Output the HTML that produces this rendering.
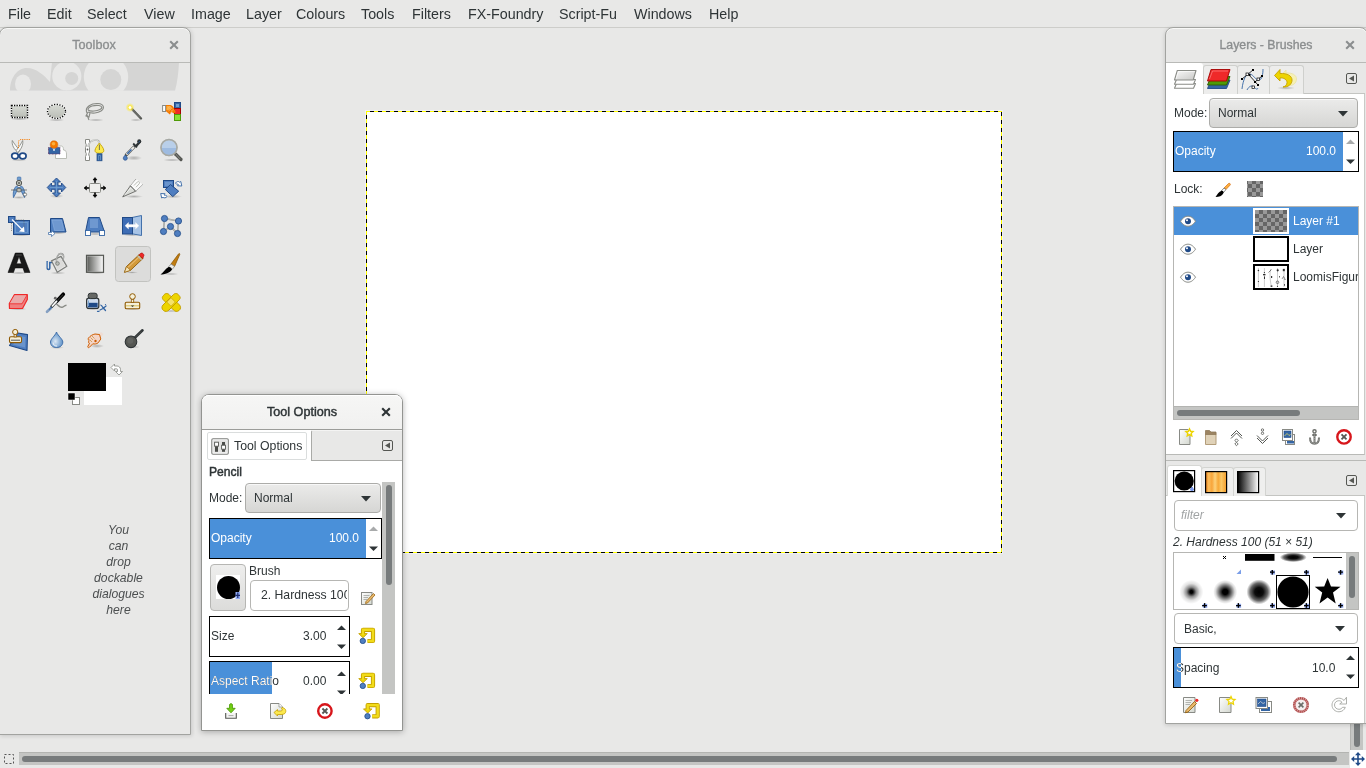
<!DOCTYPE html>
<html><head><meta charset="utf-8">
<style>
html,body{margin:0;padding:0;}
body{width:1366px;height:768px;overflow:hidden;position:relative;background:#e8e8e7;font-family:"Liberation Sans",sans-serif;color:#2e3436;}
.a{position:absolute;}
.t{position:absolute;white-space:nowrap;line-height:1;will-change:transform;}
.win{position:absolute;box-sizing:border-box;}
svg{position:absolute;overflow:visible;}
</style></head><body>

<!-- menubar -->
<div class="a" style="left:0;top:0;width:1366px;height:27px;background:#e8e8e7;border-bottom:1px solid #cdcdca;"></div>
<div class="t" style="top:6.5px;left:8px;font-size:14.3px;color:#2e3436;">File</div>
<div class="t" style="top:6.5px;left:46.5px;font-size:14.3px;">Edit</div>
<div class="t" style="top:6.5px;left:87px;font-size:14.3px;">Select</div>
<div class="t" style="top:6.5px;left:143.5px;font-size:14.3px;">View</div>
<div class="t" style="top:6.5px;left:190.5px;font-size:14.3px;">Image</div>
<div class="t" style="top:6.5px;left:245.5px;font-size:14.3px;">Layer</div>
<div class="t" style="top:6.5px;left:296px;font-size:14.3px;">Colours</div>
<div class="t" style="top:6.5px;left:360.5px;font-size:14.3px;">Tools</div>
<div class="t" style="top:6.5px;left:411.5px;font-size:14.3px;">Filters</div>
<div class="t" style="top:6.5px;left:467.5px;font-size:14.3px;">FX-Foundry</div>
<div class="t" style="top:6.5px;left:558.5px;font-size:14.3px;">Script-Fu</div>
<div class="t" style="top:6.5px;left:633.5px;font-size:14.3px;">Windows</div>
<div class="t" style="top:6.5px;left:708.5px;font-size:14.3px;">Help</div>

<!-- canvas -->
<svg style="left:0;top:0" width="1366" height="768">
  <rect x="365.5" y="110.5" width="637" height="443" fill="none" stroke="#f0f0f8" stroke-width="1"/>
  <rect x="366" y="111" width="636" height="442" fill="#ffffff"/>
  <rect x="366.5" y="111.5" width="635" height="441" fill="none" stroke="#ffff00" stroke-width="1"/>
  <g stroke="#000" stroke-width="1" stroke-dasharray="4 4">
   <path d="M1001.5 111 V553" stroke-dashoffset="7"/>
   <path d="M366 552.5 H1002" stroke-dashoffset="5"/>
   <path d="M366 111.5 H1002" stroke-dashoffset="4"/>
   <path d="M366.5 111 V553" stroke-dashoffset="4"/>
  </g>
</svg>

<!-- bottom scrollbars -->
<div class="a" style="left:19px;top:752px;width:1330px;height:13px;background:#c4c5c3;border-top:1px solid #b3b4b1;box-sizing:border-box;"></div>
<div class="a" style="left:22px;top:756px;width:1315px;height:6px;background:#777b7c;border-radius:3px;"></div>
<div class="a" style="left:1350px;top:28px;width:13px;height:722px;background:#c4c5c3;border-left:1px solid #b3b4b1;box-sizing:border-box;"></div>
<div class="a" style="left:1354px;top:28px;width:6px;height:719px;background:#777b7c;border-radius:3px;"></div>
<div class="a" style="left:1350px;top:750px;width:16px;height:18px;background:#ffffff;"></div>
<svg style="left:0;top:0" width="1366" height="768">
  <rect x="4.5" y="754.5" width="9" height="9" fill="none" stroke="#555" stroke-width="1" stroke-dasharray="2 2"/>
</svg>

<!-- TOOLBOX window -->
<div class="win" style="left:-1px;top:27px;width:192px;height:708px;background:#e8e8e7;border:1px solid #a2a3a0;border-radius:8px 8px 0 0;box-shadow:inset 0 1px #f8f8f7, 1px 1px 4px rgba(0,0,0,0.14);"></div>
<div class="a" style="left:0;top:62px;width:190px;height:1px;background:#b9bab7;"></div>
<div class="t" style="top:38.6px;left:-5.65px;width:200px;text-align:center;font-size:12.6px;color:#8b8e8f;-webkit-text-stroke:0.35px #8b8e8f;">Toolbox</div>


<svg width="10" height="10" style="left:169px;top:40px"><path d="M1.2 1.2L8.8 8.8M8.8 1.2L1.2 8.8" stroke="#8b8e8f" stroke-width="2.1"/></svg>
<div class="t" style="top:521.5px;left:58px;width:121px;text-align:center;font-size:12.2px;line-height:16px;font-style:italic;color:#4c4f50;white-space:normal;">You<br>can<br>drop<br>dockable<br>dialogues<br>here</div>

<!-- TOOL OPTIONS window -->
<div class="win" style="left:201px;top:394px;width:202px;height:337px;background:#ffffff;border:1px solid #939491;border-radius:8px 8px 0 0;box-shadow:0 1px 6px rgba(0,0,0,0.28);"></div>
<div class="a" style="left:202px;top:395px;width:200px;height:34px;background:linear-gradient(#f6f6f5,#f1f1f0);border-radius:7px 7px 0 0;border-bottom:1px solid #9c9d9a;box-shadow:inset 0 1px #ffffff;"></div>
<div class="t" style="top:406.1px;left:201.65px;width:200px;text-align:center;font-size:12.6px;color:#2e3436;-webkit-text-stroke:0.45px #2e3436;">Tool Options</div>
<svg width="10" height="10" style="left:381px;top:406.5px"><path d="M1.2 1.2L8.8 8.8M8.8 1.2L1.2 8.8" stroke="#2e3436" stroke-width="2.1"/></svg>
<div class="a" style="left:311px;top:430px;width:91px;height:31px;background:#e8e8e7;border-left:1px solid #a9aaa7;border-bottom:1px solid #a9aaa7;border-top:1px solid #f4f4f3;border-top-left-radius:2px;box-sizing:border-box;"></div>
<div class="a" style="left:207px;top:432px;width:100px;height:28px;background:#ffffff;border:1px solid #dadddd;border-radius:2px;box-sizing:border-box;"></div>
<div class="t" style="top:439.5px;left:233.5px;font-size:12.3px;color:#2e3436;">Tool Options</div>
<div class="a" style="left:202px;top:461px;width:200px;height:269px;background:#ffffff;"></div>
<div class="t" style="top:466.1px;left:208.8px;font-size:12.1px;color:#2e3436;-webkit-text-stroke:0.45px #2e3436;">Pencil</div>
<div class="t" style="top:491.5px;left:208.5px;font-size:12px;color:#2e3436;">Mode:</div>
<div class="a" style="left:245px;top:483px;width:136px;height:30px;box-sizing:border-box;border:1px solid #acaca9;border-radius:4px;background:linear-gradient(#ebebea,#d6d6d4);box-shadow:inset 0 1px #f8f8f8;"></div>
<div class="t" style="top:491.5px;left:253.5px;font-size:12px;color:#2e3436;">Normal</div>
<svg width="10" height="6" style="left:360.8px;top:495.5px"><path d="M0 0H10L5 5.5Z" fill="#2e3436"/></svg>

<div class="a" style="left:209px;top:518px;width:173px;height:41px;box-sizing:border-box;border:1px solid #000;background:#fff;"></div>
<div class="a" style="left:210px;top:519px;width:156px;height:39px;background:#4a90d9;"></div>
<div class="t" style="top:532px;left:211px;font-size:12px;color:#fff;">Opacity</div>
<div class="t" style="top:532px;left:328.5px;font-size:12px;color:#fff;">100.0</div>
<svg width="10" height="6" style="left:369px;top:525.5px"><path d="M0 5H9L4.5 0.5Z" fill="#a8aaab"/></svg>
<svg width="10" height="6" style="left:369px;top:545.5px"><path d="M0 0.5H9L4.5 5Z" fill="#2e3436"/></svg>

<div class="a" style="left:210px;top:564px;width:36px;height:47px;box-sizing:border-box;border:1px solid #b6b6b3;border-radius:4px;background:linear-gradient(#eeeeed,#dcdcda);"></div>
<div class="a" style="left:216px;top:575px;width:24px;height:24px;background:#fff;"></div>
<div class="a" style="left:216.5px;top:575.5px;width:23px;height:23px;background:#000;border-radius:50%;"></div>
<div class="t" style="top:564.5px;left:249px;font-size:12px;color:#2e3436;">Brush</div>
<div class="a" style="left:250px;top:580px;width:99px;height:31px;box-sizing:border-box;border:1px solid #b6b6b3;border-radius:4px;background:#fff;overflow:hidden;">
  <div class="a" style="left:0;top:0;width:96px;height:29px;overflow:hidden;"><div class="t" style="top:8px;left:10px;font-size:12.2px;color:#2e3436;">2. Hardness 100</div></div>
</div>

<div class="a" style="left:209px;top:616px;width:141px;height:41px;box-sizing:border-box;border:1px solid #000;background:#fff;"></div>
<div class="t" style="top:630px;left:211px;font-size:12px;color:#2e3436;">Size</div>
<div class="t" style="top:630px;left:302.5px;font-size:12px;color:#2e3436;">3.00</div>
<svg width="10" height="6" style="left:337px;top:624.5px"><path d="M0 5H9L4.5 0.5Z" fill="#2e3436"/></svg>
<svg width="10" height="6" style="left:337px;top:643.5px"><path d="M0 0.5H9L4.5 5Z" fill="#2e3436"/></svg>

<div class="a" style="left:202px;top:661px;width:180px;height:33px;overflow:hidden;">
  <div class="a" style="left:7px;top:0;width:141px;height:41px;box-sizing:border-box;border:1px solid #000;background:#fff;"></div>
  <div class="a" style="left:8px;top:1px;width:62px;height:39px;background:#4a90d9;"></div>
  <div class="t" style="top:14px;left:9px;font-size:12px;color:#2e3436;">Aspect Ratio</div>
  <div class="a" style="left:9px;top:2px;width:61px;height:37px;overflow:hidden;"><div class="t" style="top:12px;left:0;font-size:12px;color:#fff;">Aspect Ratio</div></div>
  <div class="t" style="top:14px;left:100.5px;font-size:12px;color:#2e3436;">0.00</div>
  <svg width="10" height="6" style="left:135px;top:9.5px"><path d="M0 5H9L4.5 0.5Z" fill="#2e3436"/></svg>
  <svg width="10" height="6" style="left:135px;top:28.5px"><path d="M0 0.5H9L4.5 5Z" fill="#2e3436"/></svg>
</div>
<!-- tool options scrollbar -->
<div class="a" style="left:382px;top:482px;width:13px;height:212px;background:#c4c5c3;"></div>
<div class="a" style="left:386px;top:485px;width:6px;height:100px;background:#777b7c;border-radius:3px;"></div>


<!-- LAYERS window -->
<div class="win" style="left:1165px;top:27px;width:203px;height:697px;background:#e8e8e7;border:1px solid #a2a3a0;border-radius:8px 8px 0 0;box-shadow:inset 0 1px #f8f8f7, 0 1px 4px rgba(0,0,0,0.16);"></div>
<div class="a" style="left:1166px;top:62px;width:200px;height:1px;background:#b9bab7;"></div>
<div class="t" style="top:38.6px;left:1165.8px;width:200px;text-align:center;font-size:12.3px;color:#8b8e8f;-webkit-text-stroke:0.35px #8b8e8f;">Layers - Brushes</div>
<svg width="10" height="10" style="left:1345px;top:40px"><path d="M1.2 1.2L8.8 8.8M8.8 1.2L1.2 8.8" stroke="#8b8e8f" stroke-width="2.1"/></svg>
<!-- layers tabs -->
<div class="a" style="left:1166px;top:63px;width:199px;height:31px;background:#e8e8e7;border-bottom:1px solid #c4c5c2;box-sizing:border-box;"></div>
<div class="a" style="left:1203px;top:65px;width:35px;height:29px;background:#ededec;border:1px solid #cfd0cd;border-bottom:none;border-radius:3px 3px 0 0;box-sizing:border-box;"></div>
<div class="a" style="left:1237px;top:65px;width:33px;height:29px;background:#ededec;border:1px solid #cfd0cd;border-bottom:none;border-radius:3px 3px 0 0;box-sizing:border-box;"></div>
<div class="a" style="left:1269px;top:65px;width:35px;height:29px;background:#ededec;border:1px solid #cfd0cd;border-bottom:none;border-radius:3px 3px 0 0;box-sizing:border-box;"></div>
<div class="a" style="left:1166px;top:63px;width:37px;height:31px;background:#ffffff;border-radius:0 3px 0 0;box-sizing:border-box;"></div>
<div class="a" style="left:1166px;top:94px;width:199px;height:361px;background:#ffffff;border-right:1px solid #c9cac7;border-bottom:1px solid #b9bab7;box-sizing:border-box;"></div>
<div class="t" style="top:106.5px;left:1173.5px;font-size:12px;color:#2e3436;">Mode:</div>
<div class="a" style="left:1209px;top:98px;width:149px;height:30px;box-sizing:border-box;border:1px solid #acaca9;border-radius:4px;background:linear-gradient(#ebebea,#d6d6d4);box-shadow:inset 0 1px #f8f8f8;"></div>
<div class="t" style="top:106.5px;left:1218px;font-size:12px;color:#2e3436;">Normal</div>
<svg width="10" height="6" style="left:1338px;top:110.5px"><path d="M0 0H10L5 5.5Z" fill="#2e3436"/></svg>

<div class="a" style="left:1173px;top:131px;width:186px;height:41px;box-sizing:border-box;border:1px solid #000;background:#fff;"></div>
<div class="a" style="left:1174px;top:132px;width:169px;height:39px;background:#4a90d9;"></div>
<div class="t" style="top:145px;left:1175px;font-size:12px;color:#fff;">Opacity</div>
<div class="t" style="top:145px;left:1305.5px;font-size:12px;color:#fff;">100.0</div>
<svg width="10" height="6" style="left:1346px;top:138.5px"><path d="M0 5H9L4.5 0.5Z" fill="#a8aaab"/></svg>
<svg width="10" height="6" style="left:1346px;top:158.5px"><path d="M0 0.5H9L4.5 5Z" fill="#2e3436"/></svg>

<div class="t" style="top:183px;left:1173.5px;font-size:12px;color:#2e3436;">Lock:</div>

<!-- layer list -->
<div class="a" style="left:1173px;top:206px;width:186px;height:214px;box-sizing:border-box;border:1px solid #b6b6b3;background:#fff;"></div>
<div class="a" style="left:1174px;top:207px;width:184px;height:28px;background:#4a90d9;"></div>
<div class="a" style="left:1253px;top:208px;width:36px;height:26px;background:#fff;"></div>
<div class="a" style="left:1255px;top:210px;width:32px;height:22px;background-color:#999;background-image:linear-gradient(45deg,#666 25%,transparent 25%,transparent 75%,#666 75%),linear-gradient(45deg,#666 25%,transparent 25%,transparent 75%,#666 75%);background-size:8px 8px;background-position:0 0,4px 4px;"></div>
<div class="t" style="top:214.5px;left:1293px;font-size:12px;color:#fff;">Layer #1</div>
<div class="a" style="left:1253px;top:236px;width:36px;height:26px;box-sizing:border-box;border:2px solid #000;background:#fff;"></div>
<div class="t" style="top:242.5px;left:1293px;font-size:12px;color:#2e3436;">Layer</div>
<div class="a" style="left:1253px;top:264px;width:36px;height:26px;box-sizing:border-box;border:2px solid #000;background:#fff;"></div>
<div class="a" style="left:1290px;top:264px;width:68px;height:26px;overflow:hidden;"><div class="t" style="top:6.5px;left:3px;font-size:12px;color:#2e3436;">LoomisFigure</div></div>
<div class="a" style="left:1174px;top:406px;width:184px;height:13px;background:#c4c5c3;border-top:1px solid #b3b4b1;box-sizing:border-box;"></div>
<div class="a" style="left:1177px;top:410px;width:123px;height:6px;background:#777b7c;border-radius:3px;"></div>

<!-- pane separator -->
<div class="a" style="left:1166px;top:455px;width:200px;height:6px;background:#e8e8e7;border-bottom:1px solid #b9bab7;box-sizing:border-box;"></div>
<!-- brushes tabs -->
<div class="a" style="left:1166px;top:461px;width:199px;height:35px;background:#e8e8e7;border-bottom:1px solid #c4c5c2;box-sizing:border-box;"></div>
<div class="a" style="left:1201px;top:467px;width:33px;height:29px;background:#efefee;border:1px solid #d3d4d1;border-bottom:none;border-radius:3px 3px 0 0;box-sizing:border-box;"></div>
<div class="a" style="left:1233px;top:467px;width:33px;height:29px;background:#efefee;border:1px solid #d3d4d1;border-bottom:none;border-radius:3px 3px 0 0;box-sizing:border-box;"></div>
<div class="a" style="left:1167px;top:465px;width:35px;height:31px;background:#ffffff;border:1px solid #d6d7d4;border-bottom:none;border-radius:3px 3px 0 0;box-sizing:border-box;"></div>
<div class="a" style="left:1166px;top:496px;width:199px;height:227px;background:#ffffff;border-right:1px solid #c9cac7;box-sizing:border-box;"></div>

<div class="a" style="left:1174px;top:500px;width:184px;height:31px;box-sizing:border-box;border:1px solid #b6b6b3;border-radius:4px;background:#fff;"></div>
<div class="t" style="top:508.5px;left:1180.5px;font-size:12px;font-style:italic;color:#a0a3a4;">filter</div>
<svg width="10" height="6" style="left:1335.5px;top:512.5px"><path d="M0 0H10L5 5.5Z" fill="#2e3436"/></svg>
<div class="t" style="top:535.5px;left:1173px;font-size:12px;font-style:italic;color:#2e3436;">2. Hardness 100 (51 × 51)</div>

<div class="a" style="left:1173px;top:552px;width:186px;height:58px;box-sizing:border-box;border:1px solid #b6b6b3;background:#fff;"></div>
<div class="a" style="left:1346px;top:553px;width:12px;height:56px;background:#c4c5c3;"></div>
<div class="a" style="left:1349px;top:556px;width:6px;height:42px;background:#777b7c;border-radius:3px;"></div>

<div class="a" style="left:1174px;top:613px;width:184px;height:31px;box-sizing:border-box;border:1px solid #b6b6b3;border-radius:4px;background:#fff;"></div>
<div class="t" style="top:622.5px;left:1184px;font-size:12px;color:#2e3436;">Basic,</div>
<svg width="10" height="6" style="left:1335px;top:625.5px"><path d="M0 0H10L5 5.5Z" fill="#2e3436"/></svg>

<div class="a" style="left:1173px;top:647px;width:186px;height:41px;box-sizing:border-box;border:1px solid #000;background:#fff;"></div>
<div class="a" style="left:1174px;top:648px;width:7px;height:39px;background:#4a90d9;"></div>
<div class="t" style="top:661.5px;left:1175.5px;font-size:12px;color:#2e3436;">Spacing</div>
<div class="a" style="left:1175px;top:649px;width:6px;height:37px;overflow:hidden;"><div class="t" style="top:12.5px;left:0.5px;font-size:12px;color:#fff;">Spacing</div></div>
<div class="t" style="top:661.5px;left:1312px;font-size:12px;color:#2e3436;">10.0</div>
<svg width="10" height="6" style="left:1346px;top:655px"><path d="M0 5H9L4.5 0.5Z" fill="#2e3436"/></svg>
<svg width="10" height="6" style="left:1346px;top:674px"><path d="M0 0.5H9L4.5 5Z" fill="#2e3436"/></svg>

<!-- ICONS1 -->
<svg style="left:0;top:0" width="1366" height="768">
<defs>
 <linearGradient id="gsel" x1="0" y1="0" x2="0" y2="1"><stop offset="0" stop-color="#d8dbd5"/><stop offset="1" stop-color="#babdb6"/></linearGradient>
 <linearGradient id="gblue" x1="0" y1="0" x2="1" y2="1"><stop offset="0" stop-color="#729fcf"/><stop offset="1" stop-color="#3465a4"/></linearGradient>
 <linearGradient id="gblend" x1="0" y1="0" x2="1" y2="0"><stop offset="0" stop-color="#555753"/><stop offset="1" stop-color="#ffffff"/></linearGradient>
 <radialGradient id="gshadow"><stop offset="0" stop-color="#000" stop-opacity="0.25"/><stop offset="1" stop-color="#000" stop-opacity="0"/></radialGradient>
 <radialGradient id="gglow"><stop offset="0" stop-color="#ffffff"/><stop offset="0.4" stop-color="#fce94f"/><stop offset="1" stop-color="#fce94f" stop-opacity="0"/></radialGradient>
 <linearGradient id="gpencil" x1="0" y1="0" x2="1" y2="0"><stop offset="0" stop-color="#e9b96e"/><stop offset="1" stop-color="#c17d11"/></linearGradient>
 <radialGradient id="gdrop" cx="0.4" cy="0.6"><stop offset="0" stop-color="#dbe7f3"/><stop offset="1" stop-color="#729fcf"/></radialGradient>
 <radialGradient id="gb1"><stop offset="0" stop-color="#000"/><stop offset="0.12" stop-color="#000"/><stop offset="0.4" stop-color="#000" stop-opacity="0.45"/><stop offset="0.7" stop-color="#000" stop-opacity="0.12"/><stop offset="1" stop-color="#000" stop-opacity="0"/></radialGradient>
 <radialGradient id="gb2"><stop offset="0" stop-color="#000"/><stop offset="0.22" stop-color="#000"/><stop offset="0.5" stop-color="#000" stop-opacity="0.6"/><stop offset="0.8" stop-color="#000" stop-opacity="0.15"/><stop offset="1" stop-color="#000" stop-opacity="0"/></radialGradient>
 <radialGradient id="gb3"><stop offset="0" stop-color="#000"/><stop offset="0.35" stop-color="#000" stop-opacity="0.95"/><stop offset="0.7" stop-color="#000" stop-opacity="0.6"/><stop offset="1" stop-color="#000" stop-opacity="0"/></radialGradient>
 <pattern id="pchk" width="8" height="8" patternUnits="userSpaceOnUse"><rect width="8" height="8" fill="#999"/><rect width="4" height="4" fill="#666"/><rect x="4" y="4" width="4" height="4" fill="#666"/></pattern>
</defs>

<!-- Wilber banner -->
<clipPath id="wclip"><rect x="0" y="63" width="190" height="27.8"/></clipPath>
<g clip-path="url(#wclip)">
<path d="M10 90.8 C10 78 17 68 27 68 C36 68 44 75 50 82 L52 62 H179 C178.5 72 177.5 82 175 90.8 Z" fill="#d5d5d4"/>
<g fill="#e8e8e7">
 <ellipse cx="23" cy="84" rx="8" ry="9.5"/>
 <circle cx="66.8" cy="76" r="14.6"/>
 <circle cx="106" cy="77" r="22.2"/>
</g>
<g fill="#d5d5d4">
 <circle cx="71.7" cy="78.4" r="6.5"/>
 <circle cx="110.8" cy="79.6" r="10.5"/>
</g>
</g>
<!-- pencil active highlight -->
<rect x="115.5" y="246.5" width="35" height="35" rx="3" fill="#dcdcdb" stroke="#c2c3c0"/>

<!-- R1C1 rect select -->
<ellipse cx="19.5" cy="119" rx="9" ry="1.5" fill="url(#gshadow)"/>
<rect x="11.5" y="105.5" width="16" height="12" fill="url(#gsel)" stroke="#fff" stroke-width="1"/>
<rect x="11.5" y="105.5" width="16" height="12" fill="none" stroke="#000" stroke-width="1.4" stroke-dasharray="1.3 1.2"/>
<!-- R1C2 ellipse select -->
<ellipse cx="56.5" cy="120" rx="8" ry="1.5" fill="url(#gshadow)"/>
<ellipse cx="56.5" cy="111.4" rx="9" ry="7" fill="url(#gsel)" stroke="#fff" stroke-width="1.2"/>
<ellipse cx="56.5" cy="111.4" rx="9" ry="7" fill="none" stroke="#000" stroke-width="1.3" stroke-dasharray="1.2 1.5"/>
<!-- R1C3 lasso -->
<ellipse cx="96" cy="120" rx="8" ry="1.5" fill="url(#gshadow)"/>
<g fill="none" stroke="#888a85" stroke-width="1.1">
 <path d="M87 113 C84 107 92 103 98 103.5 C104 104 105 108 101 111 C98 113 92 114 88 112"/>
 <path d="M88 110 C88 106 95 105 99 105.5 C102 106 103 108 100 109.5 C97 111 91 112 88 110"/>
 <path d="M88 112 L86 116 L89 117 L90 113 M87 115 L89 120"/>
</g>
<!-- R1C4 wand -->
<ellipse cx="136" cy="120" rx="6" ry="1.3" fill="url(#gshadow)"/>
<path d="M131 108 L141 118.5" stroke="#555753" stroke-width="2.4" stroke-linecap="round"/>
<path d="M132 109.5 L140 117.5" stroke="#888a85" stroke-width="0.8"/>
<circle cx="130" cy="107.5" r="4.5" fill="url(#gglow)"/>
<circle cx="130" cy="107.5" r="1.3" fill="#fff"/>
<!-- R1C5 select by color -->
<rect x="174.5" y="102.5" width="6" height="6" fill="#3465a4" stroke="#204a87"/>
<rect x="176" y="104" width="3" height="3" fill="#729fcf"/>
<rect x="174.5" y="108.5" width="6" height="6" fill="#ef2929" stroke="#a40000"/>
<rect x="174.5" y="114.5" width="6" height="6" fill="#8ae234" stroke="#4e9a06"/>
<rect x="162.6" y="105.5" width="3" height="6" fill="#fff" stroke="#888a85"/>
<path d="M166 105 H170.5 C171.5 105 172.5 106 173.5 107.2 L175.8 112.3 L174 113.5 L171.5 112 L169.8 114.5 L166 111.3 Z" fill="#f57900"/>
<path d="M166.5 106 H170 L172 108 L168.5 110.5 L166.5 110 Z" fill="#fcaf3e"/>
<g stroke="#fcbf70" stroke-width="0.5" opacity="0.9"><path d="M168 107 L172.5 111.5 M169.5 106 L174 110.5 M167 109.5 L170 106.5 M168.5 111.5 L172 108 M170 113 L173.5 109.5"/></g>

<!-- R2C1 scissors -->
<ellipse cx="19" cy="160" rx="8" ry="1.3" fill="url(#gshadow)"/>
<path d="M12.3 140.5 C11.5 145 14 149.5 18.5 152.5 L19.8 150.5 C17 147 14 143.5 12.3 140.5Z" fill="#fafafa" stroke="#888a85" stroke-width="0.9" stroke-linejoin="round"/>
<path d="M22.7 140.5 C23.5 145 21 149.5 17.5 152.5 L16.2 150.5 C19 147 21.2 143.5 22.7 140.5Z" fill="#fafafa" stroke="#888a85" stroke-width="0.9" stroke-linejoin="round"/>
<path d="M18.5 148 V142 C18.5 140.5 19.5 139.5 21 139.5 H30" fill="none" stroke="#f57900" stroke-width="0.9" stroke-dasharray="1 0.8"/>
<ellipse cx="15" cy="156" rx="3.3" ry="2.8" fill="#fff" stroke="#204a87" stroke-width="1.7"/>
<ellipse cx="22.8" cy="156" rx="3.3" ry="2.8" fill="#fff" stroke="#204a87" stroke-width="1.7"/>
<!-- R2C2 foreground select -->
<path d="M55.5 158.5 V151 C55.5 149 56 146 59 146 H61.5 C63 146 63.5 148 63.5 150 C66 150 66.5 152 66.5 154 V158.5 Z" fill="#fff" stroke="#babdb6" stroke-width="1"/>
<rect x="48.5" y="147.5" width="11.5" height="6.5" fill="#3465a4" stroke="#5c3566" stroke-width="0.9" stroke-dasharray="0.8 0.6"/>
<path d="M53 148 L54 151 L55 148" stroke="#fff" stroke-width="0.7" fill="none"/>
<circle cx="54" cy="144.5" r="3.8" fill="#f57900" stroke="#ce5c00" stroke-width="0.8" stroke-dasharray="0.8 0.5"/>
<circle cx="53.5" cy="143.8" r="1.8" fill="#fcaf3e"/>
<!-- R2C3 paths -->
<path d="M85.5 139.5 H89.5 V143 L88.8 144.5 V146 L89.5 147.5 V152 L88.8 153.5 V155 L89.5 156.5 V160.5 H85.5 V156.5 L86.2 155 V153.5 L85.5 152 V147.5 L86.2 146 V144.5 L85.5 143 Z" fill="#fff" stroke="#888a85" stroke-width="1"/>
<circle cx="87.5" cy="149.5" r="0.9" fill="#555753"/>
<path d="M88 147 C89 142 92 140 95.5 140 C98 140 99.5 141.5 99.5 143.5" fill="none" stroke="#a6a8a4" stroke-width="1.6"/>
<path d="M88 147 C89 142 92 140 95.5 140 C98 140 99.5 141.5 99.5 143.5" fill="none" stroke="#fff" stroke-width="0.6"/>
<path d="M99.4 143 C98 145 95 148 95 150.5 C95 152.3 96.5 153.3 99.4 153.3 C102.3 153.3 103.8 152.3 103.8 150.5 C103.8 148 100.8 145 99.4 143 Z" fill="#fce94f" stroke="#c4a000" stroke-width="0.9"/>
<path d="M99.4 144.5 V150" stroke="#555753" stroke-width="0.8"/>
<rect x="97" y="153.8" width="5" height="7" fill="#3465a4" stroke="#204a87" stroke-width="0.7"/>
<path d="M98.5 160 V155.5 H100.5 V160" fill="none" stroke="#729fcf" stroke-width="0.7"/>
<!-- R2C4 color picker -->
<ellipse cx="134" cy="158" rx="8" ry="2.5" fill="url(#gshadow)"/>
<path d="M126.3 154.8 L134 147" stroke="#555753" stroke-width="3.2" stroke-linecap="round"/>
<path d="M126.5 154.5 L134 147" stroke="#eeeeec" stroke-width="2"/>
<path d="M127.3 153.7 L131.5 149.5" stroke="#3465a4" stroke-width="1.6"/>
<path d="M133.2 143.5 L137 147.3" stroke="#2e3436" stroke-width="1.8"/>
<path d="M135 145.5 L138.5 141.5 C139.5 140 141.5 140.5 141 142.5 L137.2 146.5 Z" fill="#2e3436"/>
<circle cx="139.2" cy="141.3" r="2" fill="#2e3436"/>
<path d="M138.5 142.5 L139.8 141" stroke="#3465a4" stroke-width="0.8"/>
<path d="M125.3 155 C124.5 156 123.3 157 123.3 158.2 C123.3 159.5 124.2 160.2 125.3 160.2 C126.5 160.2 127.3 159.5 127.3 158.2 C127.3 157 126 156 125.3 155Z" fill="#4f7ec0" stroke="#204a87" stroke-width="0.7"/>
<!-- R2C5 zoom -->
<ellipse cx="172" cy="160" rx="9" ry="1.5" fill="url(#gshadow)"/>
<path d="M175.5 154 L181 159.5" stroke="#555753" stroke-width="3.2" stroke-linecap="round"/>
<path d="M176 154.5 L180.5 159" stroke="#888a85" stroke-width="1.2" stroke-dasharray="1 0.6"/>
<circle cx="169" cy="147.5" r="8" fill="#b9cfe9" stroke="#babdb6" stroke-width="1.6"/>
<path d="M161.8 148 A7.2 7.2 0 0 0 176.2 148 Z" fill="#9ebbe0"/>
<circle cx="169" cy="147.5" r="8" fill="none" stroke="#a6a8a4" stroke-width="1.4"/>
</svg>

<!-- ICONS2 -->
<svg style="left:0;top:0" width="1366" height="768">
<!-- R3C1 measure -->
<ellipse cx="19" cy="197.5" rx="8" ry="1.5" fill="url(#gshadow)"/>
<path d="M16.5 186 C13 189 13 194 13.5 197.5 C15.5 194 17 190 19 188 Z" fill="#729fcf" stroke="#3465a4" stroke-width="0.8"/>
<path d="M21.5 186 C25 189 25 194 24.5 197.5 C22.5 194 21 190 19 188 Z" fill="#729fcf" stroke="#3465a4" stroke-width="0.8"/>
<rect x="17.3" y="177" width="3.6" height="3.4" rx="0.8" fill="#729fcf" stroke="#3465a4" stroke-width="0.6"/>
<circle cx="19" cy="183" r="2.7" fill="#babdb6" stroke="#555753" stroke-width="1"/>
<circle cx="19" cy="183" r="0.9" fill="#555753"/>
<path d="M11 190 H27" stroke="#555753" stroke-width="0.7"/>
<rect x="17" y="188.3" width="4" height="3.5" rx="1" fill="#babdb6" stroke="#555753" stroke-width="0.8"/>
<circle cx="25" cy="194.5" r="1.6" fill="#fff" stroke="#555753" stroke-width="0.7"/>
<!-- R3C2 move -->
<ellipse cx="56.5" cy="196" rx="7" ry="2" fill="url(#gshadow)"/>
<path d="M56.5 178 L60.5 182 H58 V185.7 H61.5 V183 L65.8 187.5 L61.5 192 V189.3 H58 V193 H60.5 L56.5 197 L52.5 193 H55 V189.3 H51.5 V192 L47.2 187.5 L51.5 183 V185.7 H55 V182 H52.5 Z" fill="#4f7ec0" stroke="#204a87" stroke-width="0.9" stroke-linejoin="round"/>
<path d="M56.5 181 V194 M50 187.5 H63" stroke="#729fcf" stroke-width="0.8"/>
<!-- R3C3 align -->
<rect x="89.5" y="183.5" width="11" height="9" rx="1" fill="#eeeeec" stroke="#888a85" stroke-width="1"/>
<path d="M95 177.5 L93 180 H94.5 V182.5 H95.5 V180 H97 Z M95 197.5 L93 195 H94.5 V192.8 H95.5 V195 H97 Z M84 188 L86.5 186 V187.5 H88.8 V188.5 H86.5 V190 Z M106 188 L103.5 186 V187.5 H101.2 V188.5 H103.5 V190 Z" fill="#000" stroke="#000" stroke-width="0.6"/>
<!-- R3C4 crop knife -->
<ellipse cx="134" cy="196.5" rx="9" ry="1.6" fill="url(#gshadow)"/>
<path d="M122.7 196.9 L130.4 185.8 L135.7 191.2 Z" fill="#d8dad6" stroke="#555753" stroke-width="0.8" stroke-linejoin="round"/>
<path d="M124.5 195 L131 187.5 L133.5 190" fill="none" stroke="#fff" stroke-width="0.6"/>
<path d="M130.4 185.8 L136.4 179 M135.7 191.2 L142.6 184.5" stroke="#555753" stroke-width="0.9"/>
<path d="M130.4 185.8 L136.4 179 L142.6 184.5 L135.7 191.2 Z" fill="#fafafa"/>
<path d="M130.4 185.8 L135.7 191.2" stroke="#555753" stroke-width="1"/>
<path d="M134 185.5 L137.3 182 C138 181.3 139.2 181.5 139.5 182.3 C139.8 183 139.5 183.5 139 184 L136 187.2" fill="none" stroke="#babdb6" stroke-width="1"/>
<!-- R3C5 rotate -->
<ellipse cx="173" cy="196.5" rx="9" ry="1.8" fill="url(#gshadow)"/>
<rect x="163.5" y="180.5" width="10" height="7" fill="#4f7ec0" stroke="#204a87" stroke-width="1"/>
<rect x="165" y="182" width="7" height="4" fill="#6a94cc"/>
<path d="M170.5 184.5 L178.7 191.2 L172.8 196.6 L165.3 189.5 Z" fill="#4f7ec0" stroke="#204a87" stroke-width="1" stroke-linejoin="round"/>
<path d="M175.5 183 C176.5 181.5 178.5 181 179.5 182.2 L180.8 181.5 L181.8 186 L177.5 185.8 L178.5 184.6 C178 184 177.2 184 176.8 184.5 Z" fill="#fff" stroke="#3465a4" stroke-width="0.9" stroke-linejoin="round"/>
<path d="M167 196.5 C166 198 164 198.3 163 197.3 L161.7 198 L160.7 193.5 L165 193.7 L164 194.9 C164.5 195.5 165.3 195.5 165.7 195 Z" fill="#fff" stroke="#3465a4" stroke-width="0.9" stroke-linejoin="round"/>
<!-- R4C1 scale -->
<ellipse cx="21.5" cy="235" rx="9" ry="1.5" fill="url(#gshadow)"/>
<rect x="13.5" y="220.5" width="16" height="14" fill="#4f7ec0" stroke="#204a87" stroke-width="1"/>
<rect x="15.5" y="222.5" width="12" height="10" fill="none" stroke="#729fcf" stroke-width="0.8"/>
<path d="M16 220 H24 V228" fill="none" stroke="#555753" stroke-width="0.7" stroke-dasharray="0.8 1"/>
<path d="M11.5 223 V231" stroke="#555753" stroke-width="0.7" stroke-dasharray="0.8 1"/>
<rect x="8.5" y="216.5" width="6.5" height="6" fill="#4f7ec0" stroke="#204a87" stroke-width="1"/>
<path d="M12 219.5 L23 230.5" stroke="#fff" stroke-width="1.1"/>
<path d="M24.5 232 L19 231.5 L24 226.5 Z" fill="#fff"/>
<!-- R4C2 shear -->
<ellipse cx="58" cy="233" rx="8" ry="1.5" fill="url(#gshadow)"/>
<path d="M50.5 218.5 H62.5 L66 232 H50.5 Z" fill="#4f7ec0" stroke="#204a87" stroke-width="1"/>
<path d="M52 220 H61.5 L64 230.5 H54.5 Z" fill="#6f98d0" stroke="#8fb2df" stroke-width="0.6"/>
<path d="M48.5 232.5 H51.5 V230.5 L55 233.5 L51.5 236.5 V234.5 H48.5 Z" fill="#fff" stroke="#3465a4" stroke-width="0.7"/>
<!-- R4C3 perspective -->
<ellipse cx="95" cy="234" rx="9" ry="1.5" fill="url(#gshadow)"/>
<path d="M88.5 217.5 H99.5 L104.5 232 H85.5 Z" fill="#4f7ec0" stroke="#204a87" stroke-width="1"/>
<rect x="90" y="219" width="8" height="9" fill="#6f98d0"/>
<rect x="85.5" y="230.5" width="5" height="5" fill="#fff" stroke="#3465a4" stroke-width="0.9"/>
<rect x="99.5" y="230.5" width="5" height="5" fill="#fff" stroke="#3465a4" stroke-width="0.9"/>
<!-- R4C4 flip -->
<ellipse cx="132" cy="235" rx="9" ry="1.3" fill="url(#gshadow)"/>
<path d="M132 217.5 L141.5 215.5 V235.5 L132 233.8 Z" fill="#a8c4e6" stroke="#3465a4" stroke-width="0.9"/>
<rect x="122.5" y="217.5" width="10" height="16.5" fill="#3e6db5" stroke="#204a87" stroke-width="1"/>
<path d="M125 225.7 L128.5 222.5 V224.5 H135.5 V222.5 L139 225.7 L135.5 229 V227 H128.5 V229 Z" fill="#fff" stroke="#eee" stroke-width="0.4"/>
<!-- R4C5 cage -->
<path d="M164.5 218.5 L178.5 221 L177.5 233.5 L170.5 226.5 L163.5 231.5 Z" fill="none" stroke="#888a85" stroke-width="1.5"/>
<path d="M164.5 218.5 L178.5 221 L177.5 233.5 L170.5 226.5 L163.5 231.5 Z" fill="none" stroke="#eeeeec" stroke-width="0.5"/>
<g fill="#4f7ec0" stroke="#204a87" stroke-width="0.8">
<circle cx="164.5" cy="218.5" r="3.1"/><circle cx="178.5" cy="221" r="3.1"/><circle cx="170.5" cy="226.5" r="3.1"/><circle cx="163.5" cy="231.5" r="3.1"/><circle cx="177.5" cy="233.5" r="3.1"/>
</g>

<!-- R5C1 text -->
<ellipse cx="19" cy="273" rx="9" ry="1.5" fill="url(#gshadow)"/>
<path d="M8 272.5 L15.3 253 H22.5 L30 272.5 H24.5 L23 268 H15 L13.5 272.5 Z M16.5 263.8 H21.5 L19 256.5 Z" fill="#1a1a1a" fill-rule="evenodd" stroke="#000" stroke-width="0.5"/>
<path d="M16 255 H21.8" stroke="#555" stroke-width="0.8"/>
<!-- R5C2 bucket -->
<ellipse cx="58" cy="273" rx="8" ry="1.3" fill="url(#gshadow)"/>
<path d="M47.2 261 V268.3 C47.2 269.8 49.8 269.8 49.8 268.3 V262.5 H52.5" fill="none" stroke="#3465a4" stroke-width="1.5"/>
<path d="M47.2 261.5 V268" stroke="#8fb2df" stroke-width="0.6"/>
<path d="M51.5 260.8 L61 256.3 L66.8 266.3 L57.3 272.3 Z" fill="#eeeeec" stroke="#7d7f7c" stroke-width="1.3" stroke-linejoin="round"/>
<path d="M53 261.5 L60.5 258 L65 265.8 L57.8 270.5 Z" fill="#dcdcda"/>
<path d="M56.5 263.5 C56 257.5 58 253.5 60.8 253.5 C63.8 253.5 64.5 257 62.5 261" fill="none" stroke="#7d7f7c" stroke-width="1.3"/>
<path d="M56.5 263.5 C56 257.5 58 253.5 60.8 253.5 C63.8 253.5 64.5 257 62.5 261" fill="none" stroke="#eee" stroke-width="0.5"/>
<circle cx="57.5" cy="263.5" r="1.8" fill="#babdb6" stroke="#7d7f7c" stroke-width="0.9"/>
<!-- R5C3 blend -->
<ellipse cx="96" cy="273" rx="9" ry="1.3" fill="url(#gshadow)"/>
<rect x="86.5" y="255.3" width="17" height="17" fill="url(#gblend)" stroke="#555753" stroke-width="1.2"/>
<rect x="87.6" y="256.4" width="14.8" height="14.8" fill="none" stroke="#ddd" stroke-width="0.5" opacity="0.6"/>
<!-- R5C4 pencil -->
<ellipse cx="132" cy="272.5" rx="6" ry="1.2" fill="url(#gshadow)"/>
<path d="M124.5 272.3 L126.5 266.5 L139 254.8 L142.8 258.6 L130.5 270.3 Z" fill="#d29a3a" stroke="#8f5902" stroke-width="0.9" stroke-linejoin="round"/>
<path d="M127.6 267.6 L140.3 255.8" stroke="#e9b96e" stroke-width="1.1"/>
<path d="M124.5 272.3 L126.5 266.5 L128.5 268.4 L130.5 270.3 Z" fill="#f3e2b5" stroke="#8f5902" stroke-width="0.6"/>
<path d="M139 254.8 L140.5 253.5 C141.5 252.8 142.5 253 143.2 253.8 C144 254.6 144.2 255.7 143.5 256.5 L142.8 258.6 Z" fill="#ef2929" stroke="#a40000" stroke-width="0.6"/>
<path d="M137.8 256 L141.6 259.8" stroke="#babdb6" stroke-width="1.4"/>
<!-- R5C5 paintbrush -->
<ellipse cx="171" cy="274" rx="8" ry="1.2" fill="url(#gshadow)"/>
<path d="M171 264 L178.5 254 C179 253.2 180 253.5 179.8 254.3 L174.5 266.5 Z" fill="#c17d11" stroke="#8f5902" stroke-width="0.8"/>
<path d="M168.5 267 L171 264 L174.5 266.5 L172 269.5 Z" fill="#eeeeec" stroke="#888a85" stroke-width="0.8"/>
<path d="M160.5 274.5 C163 273 165 269 168.5 267 C170 266.5 172 268 172 269.5 C170 273 165 274.5 160.5 274.5 Z" fill="#000"/>

<!-- R6C1 eraser -->
<ellipse cx="18" cy="309" rx="9" ry="1.5" fill="url(#gshadow)"/>
<path d="M9.3 303.5 L14.5 294.5 H27.3 V299.5 L22.5 308.5 H9.5 Z" fill="#f08080" stroke="#ef2929" stroke-width="1.2" stroke-linejoin="round"/>
<path d="M9.8 303.5 L14.5 295.5 H26.8 L22 303.5 Z" fill="#e9aaaa"/>
<path d="M9.8 303.8 H22 L27 295" fill="none" stroke="#ef2929" stroke-width="0.8"/>
<!-- R6C2 airbrush -->
<path d="M56.5 301.5 L63.3 294.2" stroke="#000" stroke-width="3.6" stroke-linecap="round"/>
<path d="M57.5 300.5 L63 294.6" stroke="#555753" stroke-width="1.2" stroke-dasharray="0.7 0.7"/>
<path d="M51.8 306.5 L56.8 301" stroke="#2e3436" stroke-width="3" stroke-linecap="round"/>
<path d="M52.3 306 L56.5 301.4" stroke="#fff" stroke-width="1.6" stroke-linecap="round"/>
<circle cx="55.3" cy="298.2" r="1.4" fill="#666"/>
<path d="M56.5 304 C58.5 306 60 307.5 62 307.3 C63.5 307.2 64 305.5 66.5 305.2" fill="none" stroke="#888a85" stroke-width="1.4"/>
<path d="M47 311.8 L51 308" stroke="#3465a4" stroke-width="2.6" stroke-linecap="round" opacity="0.55"/>
<path d="M49 309.8 L51.2 307.6" stroke="#3465a4" stroke-width="1.4" opacity="0.8"/>
<!-- R6C3 ink -->
<ellipse cx="93" cy="309" rx="7" ry="1.5" fill="url(#gshadow)"/>
<rect x="86.6" y="298.2" width="12.2" height="10.2" rx="2.2" fill="#cfdcee" stroke="#2e3436" stroke-width="1.2"/>
<rect x="87.8" y="302.8" width="9.8" height="4.5" fill="#204a87"/>
<path d="M88.5 300.5 V306" stroke="#729fcf" stroke-width="0.9"/>
<rect x="88.2" y="293.2" width="9" height="5.4" rx="2.2" fill="#666865" stroke="#2e3436" stroke-width="1"/>
<path d="M100 310 L103 308.5 L106 306 M102.5 307 L105.5 310.5 M101.5 305.5 L103.5 308.5 M97.5 311.3 H99" stroke="#3465a4" stroke-width="1.3" fill="none" stroke-linecap="round"/>
<circle cx="105.5" cy="304.5" r="0.6" fill="#3465a4"/><circle cx="100.5" cy="305" r="0.5" fill="#3465a4"/>
<!-- R6C4 clone -->
<ellipse cx="132.5" cy="309" rx="7" ry="1.3" fill="url(#gshadow)"/>
<rect x="125.2" y="302.2" width="14.5" height="6.5" rx="1.3" fill="#f5f0da" stroke="#8f5902" stroke-width="1.1"/>
<path d="M126 305.8 H139" stroke="#c4a000" stroke-width="0.6"/>
<path d="M130.8 305.5 H134.2 L132.5 307 Z" fill="#2e3436"/>
<rect x="131.3" y="299" width="2.4" height="3.5" fill="#f5f0da" stroke="#8f5902" stroke-width="0.8"/>
<circle cx="132.5" cy="296.5" r="2.8" fill="#f5f0da" stroke="#8f5902" stroke-width="1"/>
<!-- R6C5 heal -->
<ellipse cx="171" cy="311" rx="8" ry="1.2" fill="url(#gshadow)"/>
<g fill="#edd400" stroke="#c4a000" stroke-width="1">
<path d="M163.5 295.5 C165 293 167.5 293 169 294.5 L179.5 305 C181 306.5 181 309 179 310.5 C177 312 175 311.5 173.5 310 L163 299.5 C162 298 162 297 163.5 295.5Z"/>
<path d="M179 295.5 C177.5 293 175 293 173.5 294.5 L163 305 C161.5 306.5 161.5 309 163.5 310.5 C165.5 312 167.5 311.5 169 310 L179.5 299.5 C180.5 298 180.5 297 179 295.5Z"/>
</g>
<rect x="168" y="299" width="6" height="6" transform="rotate(45 171 302)" fill="#f5e26a" stroke="#c4a000" stroke-width="0.6"/>

<!-- R7C1 persp clone -->
<path d="M9.5 345.5 L17.8 333 L27.5 334.6 L27 350.5 Z" fill="#4f7ec0" stroke="#204a87" stroke-width="1.1" stroke-linejoin="round"/>
<path d="M13 344.5 L19 336 L25.5 337 L25 347.5 Z" fill="#6a94cc"/>
<rect x="9.5" y="336.8" width="12" height="5.8" rx="1.3" fill="#f5f0da" stroke="#8f5902" stroke-width="1.1"/>
<path d="M11 340.2 H20" stroke="#2e3436" stroke-width="0.8"/>
<rect x="14.1" y="334" width="2.2" height="3" fill="#f5f0da" stroke="#8f5902" stroke-width="0.8"/>
<circle cx="15.2" cy="332" r="2.6" fill="#f5f0da" stroke="#8f5902" stroke-width="1"/>
<!-- R7C2 blur -->
<ellipse cx="57" cy="347.5" rx="7" ry="1.5" fill="url(#gshadow)"/>
<path d="M56.5 332 C55 336 50.5 339 50.5 342 C50.5 345.5 53 347.5 56.5 347.5 C60 347.5 62.8 345.5 62.8 342 C62.8 339 58 336 56.5 332 Z" fill="url(#gdrop)" stroke="#3465a4" stroke-width="0.9"/>
<path d="M53 342.5 C53 345 55 346 57 346" fill="none" stroke="#fff" stroke-width="0.8"/>
<!-- R7C3 smudge -->
<ellipse cx="97" cy="346" rx="7" ry="2" fill="url(#gshadow)"/>
<path d="M97 335 L101 332 L103.5 334 L100 338 Z" fill="#f3d5c8" opacity="0.6"/>
<path d="M99.5 334.5 L95 334 C92.5 334.5 90 336 88.5 338 C87.8 339 88.3 340 89 340.3 L88.6 341.8 C88.3 342.6 88.8 343.2 89.5 343.2 L87.8 346.6 C87.5 347.6 88.8 348 89.5 347.2 L92.8 343.8 C94.5 344.3 96.5 344 98.2 342.8 L100.8 339 Z" fill="#f3d5c8" stroke="#ce5c00" stroke-width="1" stroke-linejoin="round"/>
<path d="M90.5 337.5 L93 340 M89.5 339.5 L92 342 M92 336 L94.5 338.5" stroke="#c17d11" stroke-width="0.6"/>
<circle cx="95.5" cy="341" r="1.2" fill="#ce5c00"/>
<!-- R7C4 dodge burn -->
<ellipse cx="133" cy="347" rx="7" ry="1.5" fill="url(#gshadow)"/>
<path d="M133 339.5 L142.5 330.3" stroke="#2e3436" stroke-width="2.6" stroke-linecap="round"/>
<path d="M135 337.5 L141.5 331.3" stroke="#555753" stroke-width="0.8"/>
<circle cx="131" cy="341.8" r="5.8" fill="#555753" stroke="#2e3436" stroke-width="1.1"/>
<circle cx="130.3" cy="340.8" r="3" fill="#626461"/>
<!-- colour swatches -->
<rect x="84" y="377" width="38" height="28" fill="#fff"/>
<rect x="68" y="363" width="38" height="28" fill="#000"/>
<rect x="72.5" y="397.5" width="7" height="7" fill="#fff" stroke="#888a85" stroke-width="1"/>
<rect x="68" y="393" width="7" height="7" fill="#000" stroke="#fff" stroke-width="0.5"/>
<path d="M111 367.5 L114.5 364 V366 H117 C119 366 120.5 367.5 120.5 369.5 V371.5 H122.5 L119 375 L115.5 371.5 H117.5 V369.5 C117.5 369 117 368.8 116.5 368.8 H114.5 V371 Z" fill="#fff" stroke="#888a85" stroke-width="0.8" stroke-linejoin="round"/>
</svg>

<!-- ICONS3 -->
<svg style="left:0;top:0" width="1366" height="768">
<defs>
 <linearGradient id="gdoc" x1="0" y1="0" x2="1" y2="1"><stop offset="0" stop-color="#ffffff"/><stop offset="1" stop-color="#d3d7cf"/></linearGradient>
 <linearGradient id="gpat" x1="0" y1="0" x2="1" y2="0"><stop offset="0" stop-color="#e8801a"/><stop offset="0.15" stop-color="#fcbf5e"/><stop offset="0.3" stop-color="#f8a53a"/><stop offset="0.45" stop-color="#fdd27c"/><stop offset="0.6" stop-color="#f7a838"/><stop offset="0.75" stop-color="#fcc865"/><stop offset="1" stop-color="#f29b2a"/></linearGradient>
 <linearGradient id="ggrad" x1="0" y1="0" x2="1" y2="0"><stop offset="0" stop-color="#000"/><stop offset="1" stop-color="#fff"/></linearGradient>
 <linearGradient id="gsheet" x1="0" y1="0" x2="1" y2="1"><stop offset="0" stop-color="#fafafa"/><stop offset="1" stop-color="#c8c8c6"/></linearGradient>
</defs>

<!-- Tool options tab icon -->
<rect x="211.8" y="438.8" width="16.5" height="15.5" rx="1.2" fill="#fff" stroke="#7d7f7c" stroke-width="1.1"/>
<rect x="213.2" y="440.2" width="13.6" height="12.4" fill="#e2e2e1"/>
<rect x="215" y="446" width="3" height="5.8" fill="#4b4d4a"/>
<rect x="214.6" y="442.2" width="3.9" height="4" fill="#fff" stroke="#555753" stroke-width="0.9"/>
<rect x="222" y="442" width="3" height="9.8" fill="#4b4d4a"/>
<rect x="221.6" y="445.2" width="3.9" height="4" fill="#fff" stroke="#555753" stroke-width="0.9"/>
<!-- menu arrow buttons -->
<g fill="none" stroke="#555753" stroke-width="1">
 <rect x="382.5" y="440.5" width="10" height="10" rx="1.5"/>
 <rect x="1346.5" y="73.5" width="10" height="10" rx="1.5"/>
 <rect x="1346.5" y="475.5" width="10" height="10" rx="1.5"/>
</g>
<path d="M385 445.5 L390 442.5 V448.5Z M1349 78.5 L1354 75.5 V81.5Z M1349 480.5 L1354 477.5 V483.5Z" fill="#555753"/>

<!-- brush preview plus marker -->
<rect x="235.5" y="592" width="4.5" height="7" fill="#8fa8f0"/><path d="M237.8 592.5 V598 M235.3 595.3 H240" stroke="#1a2a6a" stroke-width="1.2"/>
<!-- brush edit icon -->
<rect x="361.5" y="592.5" width="10.5" height="12" fill="url(#gdoc)" stroke="#888a85" stroke-width="1"/>
<path d="M363.5 595.5 H369.5 M363.5 597.5 H368 M363.5 599.5 H367" stroke="#888a85" stroke-width="0.6"/>
<path d="M366 601.5 L373.5 593.5 L375 595 L367.5 603 L365.5 603.5 Z" fill="#e9b96e" stroke="#8f5902" stroke-width="0.7"/>
<!-- reset icons -->
<g id="resetIco">
<path d="M367.5 641 H373 V629.8 H363 V634.5" fill="none" stroke="#c4a000" stroke-width="4.2" stroke-linejoin="round"/>
<path d="M358.8 633.6 H367.2 L363 637.8 Z" fill="#edd400" stroke="#c4a000" stroke-width="0.9" stroke-linejoin="round"/>
<path d="M367.5 641 H373 V629.8 H363 V635" fill="none" stroke="#f2dc1a" stroke-width="2.4" stroke-linejoin="miter"/>
<circle cx="362.8" cy="640.9" r="2.7" fill="#4f7ec0" stroke="#204a87" stroke-width="0.8"/>
</g>
<use href="#resetIco" transform="translate(0 45)"/>

<!-- tool options bottom buttons -->
<path d="M225.7 713 V718.3 H236.3 V713" fill="#f4f4f3" stroke="#555753" stroke-width="1.1"/>
<path d="M228.5 715.6 H233.5" stroke="#888a85" stroke-width="0.7"/>
<path d="M229.6 704.5 C229.6 703.5 232.4 703.5 232.4 704.5 V708.3 H235.2 L231 712.8 L226.8 708.3 H229.6 Z" fill="#73d216" stroke="#4e9a06" stroke-width="0.9" stroke-linejoin="round"/>
<path d="M270.5 703.5 H279 L282.5 707 V718.5 H270.5 Z" fill="url(#gdoc)" stroke="#888a85" stroke-width="1"/>
<path d="M279 703.5 V707 H282.5" fill="#fff" stroke="#888a85" stroke-width="0.7"/>
<path d="M274 712.5 L277.5 709.5 V711 H281 C282.5 711 282.5 709 281.5 708.5 L282 707.5 C285 708 286.5 710 285.5 712.5 C285 714 283 714.5 281 714.5 H277.5 V716 Z" fill="#fce94f" stroke="#c4a000" stroke-width="0.8" stroke-linejoin="round"/>
<g id="delIco">
<circle cx="324.9" cy="711" r="6.7" fill="#fff" stroke="#d7161b" stroke-width="2.4"/>
<path d="M322.4 708.5 L327.4 713.5 M327.4 708.5 L322.4 713.5" stroke="#555753" stroke-width="1.8"/>
</g>
<use href="#resetIco" transform="translate(4.7 75.3)"/>

<!-- Layers dock tab icons -->
<g stroke="#8a8c87" stroke-width="1.1" stroke-linejoin="round">
 <path d="M1174.5 88.3 L1176.5 83.5 H1195.5 L1193.5 88.3 Z" fill="#fff"/>
 <path d="M1174.5 84.3 L1176.5 79.5 H1195.5 L1193.5 84.3 Z" fill="#fff"/>
 <path d="M1174.5 80 L1177.3 70.5 H1196 L1193.2 80 Z" fill="url(#gsheet)"/>
</g>
<path d="M1176 79 L1178.3 71.5 H1194.8" fill="none" stroke="#fff" stroke-width="0.6"/>
<g stroke-width="0.9">
 <path d="M1207.5 88.5 L1211 80 H1230 L1226.5 88.5 Z" fill="#3465a4" stroke="#204a87"/>
 <path d="M1207.5 85 L1211 76.5 H1230 L1226.5 85 Z" fill="#4e9a06" stroke="#2c5b06"/>
 <path d="M1207.5 81 L1211 69.5 H1230 L1226.5 81 Z" fill="#ef2929" stroke="#a40000"/>
 <path d="M1209.5 79 L1212.5 71 H1228" fill="none" stroke="#f99" stroke-width="0.6"/>
</g>
<g fill="none">
 <path d="M1242 89 C1243 80 1246 73 1250 74 C1254 75 1255 80 1259 80 C1262 80 1263 74 1263 69" stroke="#3465a4" stroke-width="0.9"/>
 <path d="M1247 90 C1249 86 1252 85 1254 87 C1256 89 1257 90 1258 88" stroke="#3465a4" stroke-width="0.9"/>
 <path d="M1242 79 L1253 70 M1249 75 L1258 85 M1255 82 L1262 76" stroke="#000" stroke-width="0.8"/>
</g>
<g fill="#000"><rect x="1241" y="78" width="2" height="2"/><rect x="1252" y="69" width="2" height="2"/><rect x="1248.5" y="74" width="2" height="2"/><rect x="1257" y="84" width="2" height="2"/><rect x="1261" y="75" width="2" height="2"/><rect x="1254" y="81" width="2" height="2"/></g>
<g fill="#fff" stroke="#000" stroke-width="0.7"><rect x="1246" y="73" width="2.5" height="2.5"/><rect x="1257" y="78" width="2.5" height="2.5"/><rect x="1252" y="86" width="2.5" height="2.5"/></g>
<ellipse cx="1286" cy="88" rx="9" ry="1.8" fill="url(#gshadow)"/>
<path d="M1286 70 L1281.5 75 L1286 79.5 V77 C1289 76.5 1292 78 1292 81 C1292 83.5 1290 85 1288 85.5 C1293 86 1296.5 83 1296.5 79 C1296.5 75 1292 72.5 1286 73 Z" fill="#f7f1b0" stroke="#e9e19a" stroke-width="0.8" opacity="0.9"/>
<path d="M1280 69.5 L1274.5 75.5 L1280 81 V78 C1283.5 77.5 1287 79.5 1287 82.5 C1287 85 1285 86.5 1283 87 C1288.5 87.5 1292 84 1292 80 C1292 76 1287.5 73 1280 73.5 Z" fill="#edd400" stroke="#c4a000" stroke-width="0.9" stroke-linejoin="round"/>

<!-- lock icons -->
<path d="M1224 188 L1228.5 183.5 C1229.5 182.8 1231 184 1230.2 185 L1226 189.5 Z" fill="#fcaf3e" stroke="#ce5c00" stroke-width="0.6"/>
<path d="M1221.5 190.8 L1224 188 L1226 189.5 L1223.5 192.5 Z" fill="#fff" stroke="#555753" stroke-width="0.7"/>
<path d="M1215.5 197 C1217 195 1219 191.5 1221.5 190.8 C1223 190.5 1224 192 1223.5 193 C1222 196 1219 197 1215.5 197Z" fill="#000"/>
<rect x="1247" y="181" width="16" height="16" fill="url(#pchk)"/>

<!-- eye icons -->
<g id="eyeIco">
 <path d="M1180.5 221.2 C1183 217.5 1185.5 216.2 1188 216.2 C1190.5 216.2 1193 217.5 1195.5 221.2 C1193 225 1190.5 226.2 1188 226.2 C1185.5 226.2 1183 225 1180.5 221.2Z" fill="#fff" stroke="#888a85" stroke-width="1"/>
 <circle cx="1188" cy="221.2" r="3" fill="#204a87"/>
 <circle cx="1187" cy="220.2" r="1" fill="#fff"/>
</g>
<use href="#eyeIco" transform="translate(0 28)"/>
<use href="#eyeIco" transform="translate(0 56)"/>

<!-- loomis thumbnail sketch -->
<g stroke="#333" stroke-width="0.45" fill="none" opacity="0.55">
 <path d="M1258.4 268 V287 M1264.4 268 V287 M1270.6 269 C1269.5 275 1270 280 1271.5 287 M1277.5 268 V287 M1284 268 V287"/>
</g>
<g fill="#111" opacity="0.85">
 <circle cx="1258.4" cy="270.5" r="0.8"/><circle cx="1264.4" cy="272.5" r="0.6"/><rect x="1263" y="274" width="2.5" height="1.3"/><rect x="1264" y="276.5" width="1" height="2.5"/><circle cx="1258.4" cy="281.5" r="0.6"/>
 <path d="M1268.5 272.5 L1271.5 269.5" stroke="#111" stroke-width="0.6"/><rect x="1271" y="276" width="1.2" height="2"/><rect x="1270.6" y="285.5" width="1.8" height="1.3"/>
 <circle cx="1277.7" cy="270.3" r="1.1"/><circle cx="1277.5" cy="282.3" r="1.3" fill="none" stroke="#111" stroke-width="0.6"/><circle cx="1277.5" cy="286.3" r="0.6"/><rect x="1279" y="276" width="0.8" height="1.5"/>
 <rect x="1282.8" y="269" width="2" height="2.2"/><path d="M1282 279 L1283.5 276.5 L1285 279" stroke="#111" stroke-width="0.5" fill="none"/><circle cx="1285" cy="279.5" r="0.5"/><rect x="1284" y="284" width="0.8" height="1.8"/>
</g>
<!-- layer buttons -->
<path d="M1179.5 429.5 H1188 L1190 432 V444.5 H1179.5 Z" fill="url(#gdoc)" stroke="#888a85" stroke-width="1"/>
<path d="M1189.5 429 L1190.6 431.3 L1193 431.6 L1191.2 433.3 L1191.7 435.8 L1189.5 434.5 L1187.3 435.8 L1187.8 433.3 L1186 431.6 L1188.4 431.3 Z" fill="#fff" stroke="#edd400" stroke-width="1.5"/>
<path d="M1205.5 433.5 H1216 V444.5 H1205.5 Z" fill="#e0d2b8" stroke="#b39d7a" stroke-width="1"/>
<path d="M1205.5 433.5 V430.5 H1209.5 L1211 432 H1216 V434.5 H1205.5Z" fill="#9c8462" stroke="#8f7a58" stroke-width="0.8"/>
<g fill="none" stroke="#555753" stroke-width="1">
 <path d="M1231 436 L1236.5 430.5 L1242 436 M1231 438.5 L1236.5 433 L1242 438.5"/>
 <path d="M1257 438 L1262.5 443.5 L1268 438 M1257 435.5 L1262.5 441 L1268 435.5"/>
</g>
<g fill="#fff" stroke="#555753" stroke-width="0.8">
 <rect x="1235.3" y="439.3" width="2.4" height="2.4" transform="rotate(45 1236.5 440.5)"/>
 <rect x="1235.3" y="442.8" width="2.4" height="2.4" transform="rotate(45 1236.5 444)"/>
 <circle cx="1262.5" cy="430" r="1.2"/><circle cx="1262.5" cy="433.3" r="1.2"/>
</g>
<rect x="1285.5" y="434.5" width="9" height="10" fill="#fff" stroke="#888a85" stroke-width="1"/>
<rect x="1287" y="441" width="7" height="2.5" fill="#3465a4"/>
<rect x="1282.5" y="429.5" width="10" height="11" fill="#fff" stroke="#888a85" stroke-width="1"/>
<rect x="1284" y="431" width="7" height="6.5" fill="#3465a4" stroke="#204a87" stroke-width="0.6"/>
<path d="M1284.5 436 L1287 433.5 L1289 435.5 L1290.5 434.5" stroke="#fce94f" stroke-width="0.7" fill="none"/>
<g fill="none" stroke="#6e706c" stroke-width="2">
 <circle cx="1314.5" cy="431.3" r="1.6" stroke-width="1.4"/>
 <path d="M1314.5 433 V443.5 M1310 437.5 C1310 441.5 1312 443.8 1314.5 443.8 C1317 443.8 1319 441.5 1319 437.5 M1312.3 435 H1316.7"/>
</g>
<g fill="none" stroke="#d8d8d6" stroke-width="0.6" stroke-dasharray="0.7 1">
 <path d="M1314.5 433 V443.5 M1310 437.5 C1310 441.5 1312 443.8 1314.5 443.8 C1317 443.8 1319 441.5 1319 437.5"/>
</g>
<use href="#delIco" transform="translate(1019.1 -274.1)"/>

<!-- brushes tab icons -->
<rect x="1173.6" y="470.6" width="21" height="21" fill="#fff" stroke="#000" stroke-width="1.2"/>
<path d="M1190 488.5 H1194 V490.5 H1190Z M1191 487 H1193 V491 H1191Z" fill="#6f8fe8" opacity="0.9"/>
<circle cx="1184.2" cy="481" r="9.6" fill="#000"/>
<rect x="1205.6" y="471.6" width="21" height="21" fill="url(#gpat)" stroke="#000" stroke-width="1.2"/>
<rect x="1237.6" y="471.6" width="21" height="21" fill="url(#ggrad)" stroke="#000" stroke-width="1.2"/>

<!-- brush grid contents -->
<g fill="#000">
 <path d="M1223 556 L1226 559 M1226 556 L1223 559" stroke="#000" stroke-width="1"/>
 <rect x="1245" y="554" width="29.5" height="6.8"/>
 <ellipse cx="1293.3" cy="557.3" rx="13.5" ry="4.8" fill="url(#gb3)"/>
 <rect x="1313" y="557" width="29" height="1"/>
</g>
<path d="M1236.5 574 L1241 569.5 V574Z" fill="#7a9ee8"/>
<circle cx="1191.4" cy="591.9" r="12" fill="url(#gb1)"/>
<circle cx="1225.2" cy="591.9" r="12" fill="url(#gb2)"/>
<circle cx="1259" cy="591.9" r="12.5" fill="url(#gb3)"/>
<rect x="1276.5" y="575.5" width="33" height="33" fill="#fff" stroke="#000" stroke-width="1"/>
<circle cx="1293" cy="592" r="15.6" fill="#000"/>
<path d="M1327.6 578 L1331 586.5 L1340.5 586.8 L1333 592.5 L1335.7 603.5 L1327.6 597.5 L1319.5 603.5 L1322.2 592.5 L1314.7 586.8 L1324.2 586.5 Z" fill="#000"/>
<g stroke="#000" stroke-width="1.2">
 <path d="M1272.3 570 V574.5 M1270 572.2 H1274.6 M1306.4 570 V574.5 M1304.1 572.2 H1308.7 M1340.6 570 V574.5 M1338.3 572.2 H1342.9"/>
 <path d="M1204.6 603.3 V607.8 M1202.3 605.6 H1206.9 M1238.4 603.3 V607.8 M1236.1 605.6 H1240.7 M1272.3 603.3 V607.8 M1270 605.6 H1274.6 M1306.4 603.3 V607.8 M1304.1 605.6 H1308.7 M1340.6 603.3 V607.8 M1338.3 605.6 H1342.9"/>
</g>
<g fill="#8fa8f0">
 <rect x="1270.5" y="570.5" width="4.5" height="4"/><rect x="1304.6" y="570.5" width="4.5" height="4"/><rect x="1338.8" y="570.5" width="4.5" height="4"/>
 <rect x="1202.8" y="603.8" width="4.5" height="4"/><rect x="1236.6" y="603.8" width="4.5" height="4"/><rect x="1270.5" y="603.8" width="4.5" height="4"/><rect x="1304.6" y="603.8" width="4.5" height="4"/><rect x="1338.8" y="603.8" width="4.5" height="4"/>
</g>
<g stroke="#000" stroke-width="1.3">
 <path d="M1272.3 570 V574.5 M1270 572.2 H1274.6 M1306.4 570 V574.5 M1304.1 572.2 H1308.7 M1340.6 570 V574.5 M1338.3 572.2 H1342.9"/>
 <path d="M1204.6 603.3 V607.8 M1202.3 605.6 H1206.9 M1238.4 603.3 V607.8 M1236.1 605.6 H1240.7 M1272.3 603.3 V607.8 M1270 605.6 H1274.6 M1306.4 603.3 V607.8 M1304.1 605.6 H1308.7 M1340.6 603.3 V607.8 M1338.3 605.6 H1342.9"/>
</g>

<!-- brushes buttons -->
<path d="M1183.5 697.5 H1195 V712.5 H1183.5 Z" fill="url(#gdoc)" stroke="#888a85" stroke-width="1"/>
<path d="M1185.5 700.5 H1192 M1185.5 702.5 H1191 M1185.5 704.5 H1190" stroke="#888a85" stroke-width="0.6"/>
<path d="M1186 710.5 L1194.5 701.5 L1196.5 703.5 L1188 712 L1185.5 712.8 Z" fill="#e9b96e" stroke="#8f5902" stroke-width="0.8"/>
<circle cx="1196.8" cy="700.3" r="1.6" fill="#ef2929"/>
<path d="M1219.5 697.5 H1230 L1231 699 V712.5 H1219.5 Z" fill="url(#gdoc)" stroke="#888a85" stroke-width="1"/>
<path d="M1231 696.5 L1232.2 699.2 L1235 699.5 L1233 701.4 L1233.5 704.2 L1231 702.8 L1228.5 704.2 L1229 701.4 L1227 699.5 L1229.8 699.2 Z" fill="#fff" stroke="#edd400" stroke-width="1.3"/>
<rect x="1259.5" y="701.5" width="12" height="11" fill="#fff" stroke="#888a85" stroke-width="1"/>
<rect x="1261" y="707" width="9" height="4" fill="#3465a4"/>
<rect x="1256" y="697.5" width="11.5" height="11" fill="#fff" stroke="#888a85" stroke-width="1"/>
<rect x="1257.5" y="699" width="8.5" height="7.5" fill="#3465a4" stroke="#204a87" stroke-width="0.6"/>
<path d="M1258 704 L1260.5 701.5 L1263 703.5 L1265 702.5" stroke="#ddd" stroke-width="0.7" fill="none"/>
<circle cx="1301" cy="705" r="6.8" fill="#f4eeee" stroke="#b04a4a" stroke-width="2.6"/>
<circle cx="1301" cy="705" r="6.8" fill="none" stroke="#e8c8c8" stroke-width="2.6" stroke-dasharray="0.8 1.2" opacity="0.7"/>
<path d="M1298.6 702.6 L1303.4 707.4 M1303.4 702.6 L1298.6 707.4" stroke="#6a6c68" stroke-width="1.6"/>
<path d="M1344 700.5 C1342.5 698.8 1340.5 698 1338.5 698.2 C1334.5 698.6 1332 701.7 1332 705 C1332 708.8 1335 711.8 1339 711.8 C1342 711.8 1344.5 709.8 1345.3 707.3 H1342.5 C1341.7 708.6 1340.4 709.3 1339 709.3 C1336.4 709.3 1334.5 707.3 1334.5 705 C1334.5 702.6 1336.4 700.7 1338.8 700.7 C1340.2 700.7 1341.3 701.2 1342 702.2 L1339.7 704 H1346.5 V697.2 Z" fill="#fff" stroke="#a6a8a4" stroke-width="0.9"/>

<!-- nav icon -->
<path d="M1358 753 V765 M1352 759 H1364" stroke="#204a87" stroke-width="1.6"/>
<path d="M1358 752 L1361 755.2 H1355 Z M1358 766 L1361 762.8 H1355 Z M1351 759 L1354.2 756 V762 Z M1365 759 L1361.8 756 V762 Z" fill="#204a87"/>
</svg>

</body></html>
